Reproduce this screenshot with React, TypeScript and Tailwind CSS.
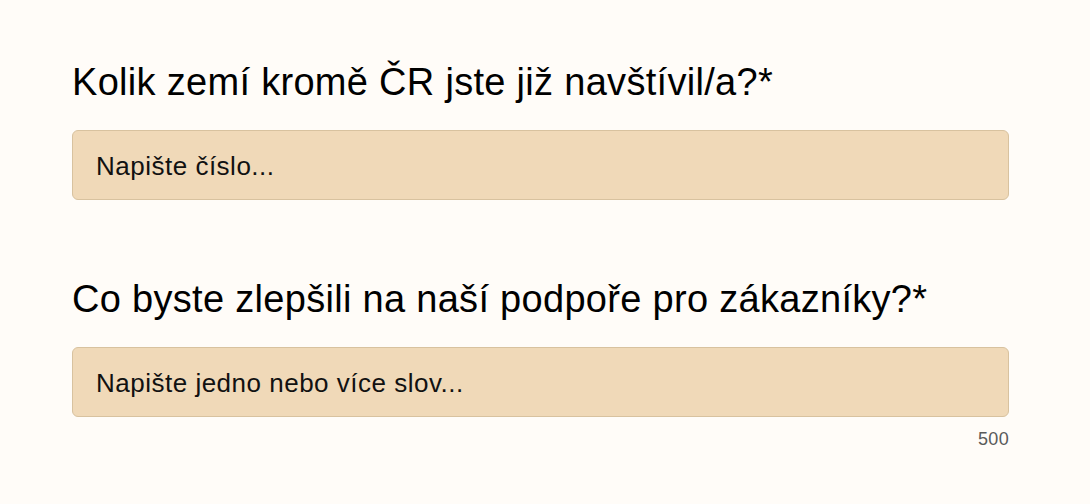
import React from 'react'

type FieldProps = {
  label: string
  placeholder: string
  counter?: string
}

function Field({ label, placeholder, counter }: FieldProps) {
  return (
    <div className="flex flex-col">
      <h2 className="text-[38px] leading-[44px] font-normal tracking-[0.3px] text-black">{label}</h2>
      <input
        type="text"
        placeholder={placeholder}
        className="mt-[26px] h-[70px] w-full rounded-[6px] border border-[#d8c29f] bg-[#f0d9b8] px-[23px] pt-[3px] text-[26px] tracking-[0.5px] text-[#111] placeholder:text-[#111] outline-none"
      />
      {counter && (
        <div className="mt-[12px] text-right text-[18px] leading-[20px] tracking-[0.3px] text-[#5a5a5a]">{counter}</div>
      )}
    </div>
  )
}

export default function App() {
  return (
    <div className="min-h-[504px] w-full bg-[#fffcf8] font-['Liberation_Sans',Arial,sans-serif]">
      <div className="flex w-[1009px] flex-col gap-[77px] pl-[72px] pt-[60px]">
        <Field label="Kolik zemí kromě ČR jste již navštívil/a?*" placeholder="Napište číslo..." />
        <Field
          label="Co byste zlepšili na naší podpoře pro zákazníky?*"
          placeholder="Napište jedno nebo více slov..."
          counter="500"
        />
      </div>
    </div>
  )
}
